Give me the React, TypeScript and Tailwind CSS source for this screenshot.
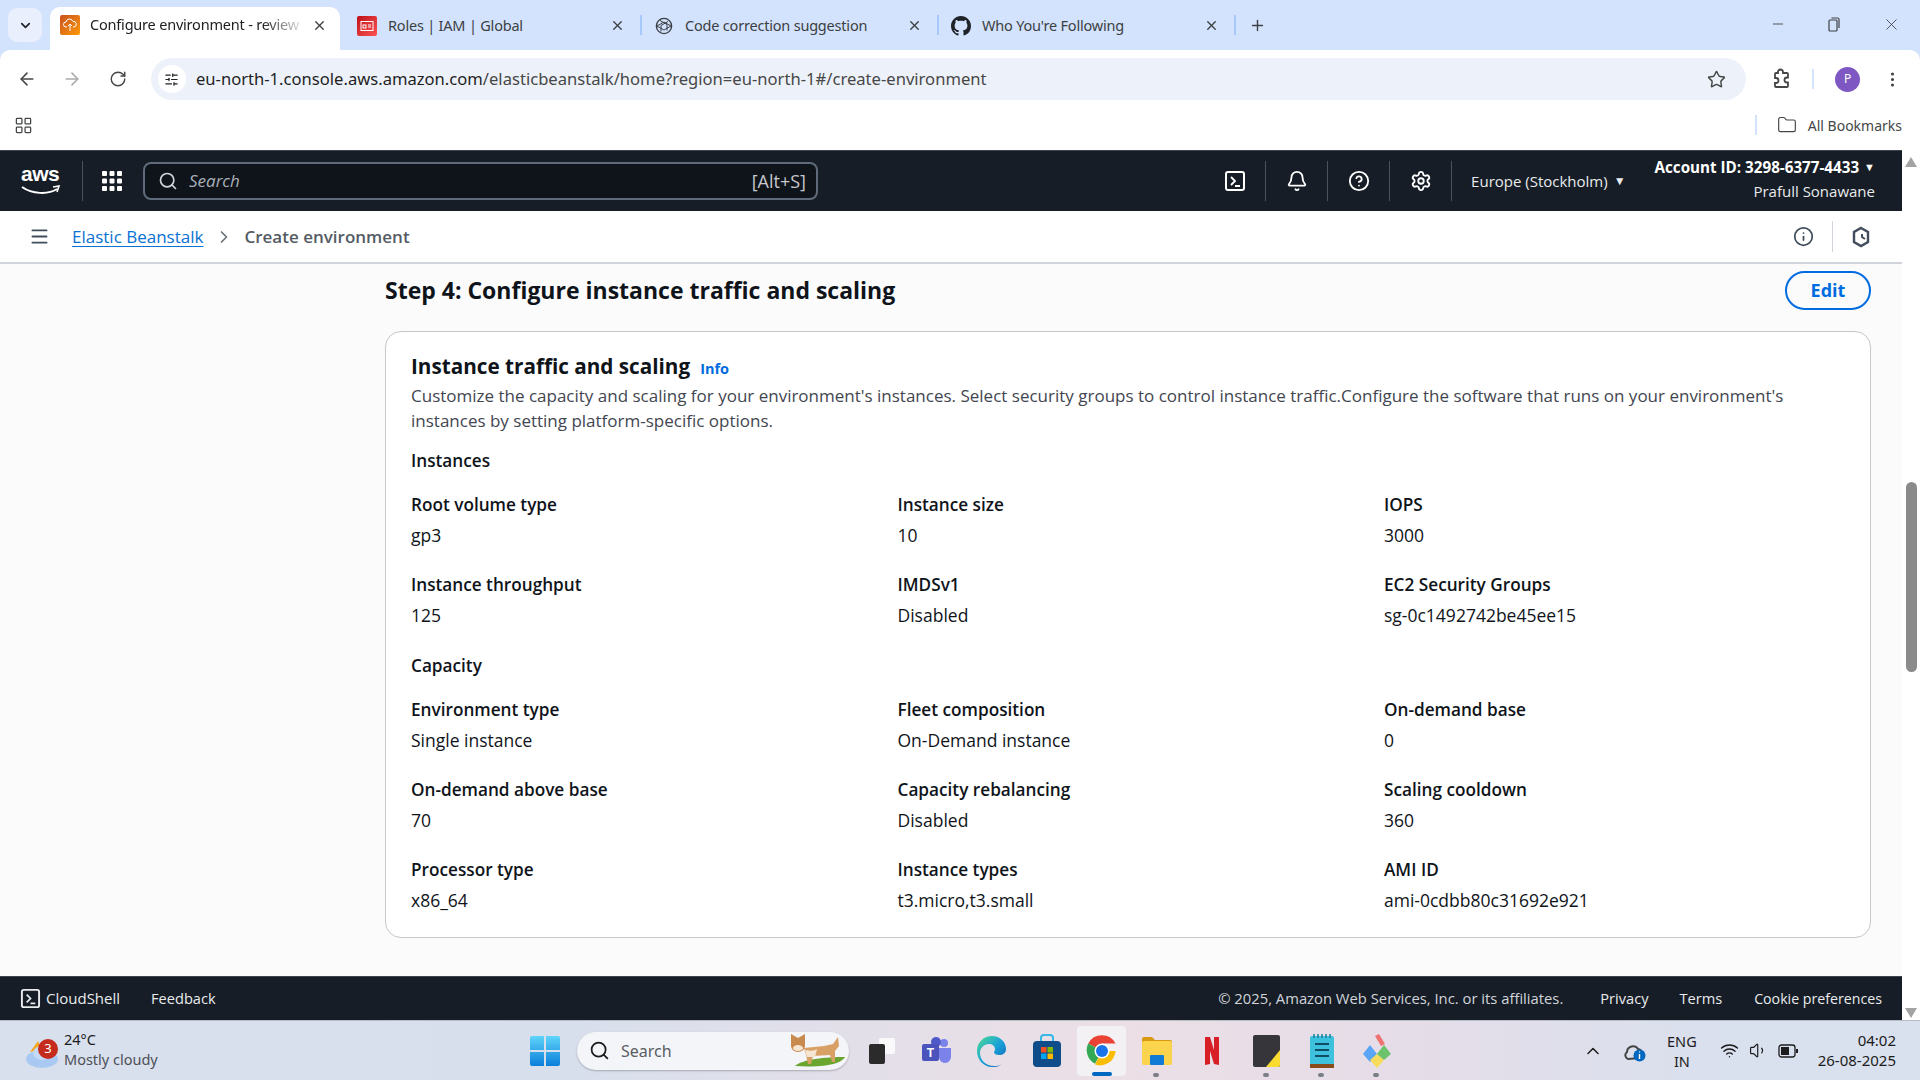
import { Bell, ChevronDown, ChevronRight, CircleHelp, Folder, Info, LayoutGrid, MoreVertical, RotateCw, Search, Settings, Star, Plus, X, ArrowLeft, ArrowRight, Menu, Minus, ChevronUp, Wifi, Volume1, SlidersHorizontal } from 'lucide-react'

const uiFont = "font-['Noto_Sans',sans-serif]"
const awsFont = "font-['Open_Sans',sans-serif]"

const instanceRows = [
  [['Root volume type', 'gp3'], ['Instance size', '10'], ['IOPS', '3000']],
  [['Instance throughput', '125'], ['IMDSv1', 'Disabled'], ['EC2 Security Groups', 'sg-0c1492742be45ee15']],
]

const capacityRows = [
  [['Environment type', 'Single instance'], ['Fleet composition', 'On-Demand instance'], ['On-demand base', '0']],
  [['On-demand above base', '70'], ['Capacity rebalancing', 'Disabled'], ['Scaling cooldown', '360']],
  [['Processor type', 'x86_64'], ['Instance types', 't3.micro,t3.small'], ['AMI ID', 'ami-0cdbb80c31692e921']],
]

function TerminalIcon({ size = 22 }: { size?: number }) {
  return (
    <svg width={size} height={size} viewBox="0 0 22 22" fill="none" stroke="currentColor" strokeWidth="2">
      <rect x="2" y="2" width="18" height="18" rx="2" />
      <path d="M7 7l4 4-4 4M11 16h5" strokeWidth="1.8" />
    </svg>
  )
}

function AwsLogo() {
  return (
    <div className="relative w-[40px] h-[32px]">
      <span className="absolute left-0 -top-[5px] text-[21px] font-bold text-white leading-[28px] tracking-[-0.5px] font-['Liberation_Sans',sans-serif]">aws</span>
      <svg className="absolute left-0 top-[20px]" width="40" height="12" viewBox="0 0 40 12" fill="none">
        <path d="M1 2c10 7 26 8 35 2" stroke="#fff" strokeWidth="2" />
        <path d="M32 2l6-1-2 6" stroke="#fff" strokeWidth="1.6" />
      </svg>
    </div>
  )
}

function FavAws() {
  return (
    <div className="w-[20px] h-[20px] shrink-0 rounded-[2px] bg-gradient-to-br from-[#c8511b] to-[#ff9900] flex items-center justify-center">
      <svg width="14" height="14" viewBox="0 0 14 14" fill="none" stroke="#fff" strokeWidth="1">
        <path d="M4 9H3a2 2 0 010-5 3.5 3.5 0 016.8-.6A2.5 2.5 0 0111 9h-1M7 6v7M5 8l2-2 2 2" />
      </svg>
    </div>
  )
}

function FavIam() {
  return (
    <div className="w-[20px] h-[20px] shrink-0 rounded-[2px] bg-gradient-to-br from-[#bd0816] to-[#ff5252] flex items-center justify-center">
      <svg width="14" height="14" viewBox="0 0 14 14" fill="none" stroke="#fff" strokeWidth="1">
        <rect x="1" y="2.5" width="12" height="9" />
        <rect x="3" y="6" width="3" height="3" />
        <path d="M8 6h3M8 8h3" />
      </svg>
    </div>
  )
}

function FavGpt() {
  return (
    <svg className="shrink-0" width="20" height="20" viewBox="0 0 20 20" fill="none" stroke="#3b3f45" strokeWidth="1.4">
      <circle cx="10" cy="10" r="7.6" />
      <path d="M6 4.5l7 4v6M14 5.5l-7 4v6M3 10l7-4 7 4M3 10l7 4 7-4" strokeWidth="1" />
    </svg>
  )
}

function FavGithub() {
  return (
    <svg className="shrink-0" width="20" height="20" viewBox="0 0 16 16" fill="#1f2328">
      <path d="M8 0C3.58 0 0 3.58 0 8c0 3.54 2.29 6.53 5.47 7.59.4.07.55-.17.55-.38 0-.19-.01-.82-.01-1.49-2.01.37-2.53-.49-2.69-.94-.09-.23-.48-.94-.82-1.13-.28-.15-.68-.52-.01-.53.63-.01 1.08.58 1.23.82.72 1.21 1.87.87 2.33.66.07-.52.28-.87.51-1.07-1.78-.2-3.64-.89-3.64-3.95 0-.87.31-1.59.82-2.15-.08-.2-.36-1.02.08-2.12 0 0 .67-.21 2.2.82.64-.18 1.32-.27 2-.27s1.36.09 2 .27c1.53-1.04 2.2-.82 2.2-.82.44 1.1.16 1.92.08 2.12.51.56.82 1.27.82 2.15 0 3.07-1.87 3.75-3.65 3.95.29.25.54.73.54 1.48 0 1.07-.01 1.93-.01 2.2 0 .21.15.46.55.38A8.01 8.01 0 0016 8c0-4.42-3.58-8-8-8z" />
    </svg>
  )
}

function ActiveTab() {
  return (
    <div className="h-[43px] w-[290px] shrink-0 bg-white rounded-t-[10px] flex items-center pl-[10px] pr-[13px] pb-[7px]">
      <FavAws />
      <span className="ml-[10px] flex-1 whitespace-nowrap overflow-hidden text-[14.5px] tracking-[-0.2px] text-[#202124] [mask-image:linear-gradient(to_right,black_80%,transparent)]">Configure environment - review</span>
      <X size={15} strokeWidth={2.2} className="ml-[6px] text-[#3c4043]" />
    </div>
  )
}

function Tab({ icon, title }: { icon: React.ReactNode; title: string }) {
  return (
    <div className="relative h-[42px] w-[297px] shrink-0 flex items-center pl-[10px] pr-[19px] pb-[7px]">
      {icon}
      <span className="ml-[11px] flex-1 whitespace-nowrap overflow-hidden text-[14.5px] tracking-[-0.2px] text-[#3c4043]">{title}</span>
      <X size={15} strokeWidth={2.2} className="text-[#3c4043]" />
      <div className="absolute right-[2px] top-[7px] w-[2px] h-[20px] bg-[#a8c7fa]" />
    </div>
  )
}

function BrowserChrome() {
  return (
    <div className={`${uiFont} shrink-0`}>
      <div className="h-[50px] bg-[#d3e3fd] flex items-end pl-[8px]">
        <div className="self-start mt-[8px] mr-[8px] w-[34px] h-[34px] rounded-[9px] bg-[#e9effc] flex items-center justify-center">
          <ChevronDown size={15} strokeWidth={2.6} className="text-[#202124]" />
        </div>
        <ActiveTab />
        <div className="ml-[7px] flex">
          <Tab icon={<FavIam />} title="Roles | IAM | Global" />
          <Tab icon={<FavGpt />} title="Code correction suggestion" />
          <Tab icon={<FavGithub />} title="Who You're Following" />
        </div>
        <Plus size={17} strokeWidth={2} className="self-center ml-[11px] text-[#3c4043]" />
        <div className="flex-1" />
        <div className="self-center flex items-center text-[#3c4043] mb-[2px]">
          <Minus size={16} strokeWidth={1.3} className="mr-[40px]" />
          <svg className="mr-[40px]" width="16" height="16" viewBox="0 0 16 16" fill="none" stroke="currentColor" strokeWidth="1.2">
            <rect x="3" y="4" width="8" height="11" rx="1" />
            <path d="M5.5 2h6a1.5 1.5 0 011.5 1.5V12" />
          </svg>
          <X size={19} strokeWidth={1.1} className="mr-[19px]" />
        </div>
      </div>
      <div className="h-[50px] bg-white rounded-t-[10px] pt-[8px] pl-[17px] pr-[18px]">
        <div className="h-[42px] flex items-center">
          <ArrowLeft size={20} strokeWidth={1.9} className="text-[#444746]" />
          <ArrowRight size={20} strokeWidth={1.9} className="ml-[25px] text-[#a9abad]" />
          <RotateCw size={18} strokeWidth={1.9} className="ml-[27px] text-[#444746]" />
          <div className="ml-[24px] w-[1597px] h-[42px] rounded-full bg-[#edf2fa] flex items-center pl-[7px] pr-[20px]">
            <div className="w-[28px] h-[28px] bg-white rounded-full flex items-center justify-center">
              <SlidersHorizontal size={15} strokeWidth={1.8} className="text-[#202124]" />
            </div>
            <span className="ml-[10px] pt-[1px] flex-1 text-[16.6px] text-[#1f1f1f] whitespace-nowrap">
              eu-north-1.console.aws.amazon.com<span className="text-[#474747]">/elasticbeanstalk/home?region=eu-north-1#/create-environment</span>
            </span>
            <Star size={19} strokeWidth={1.8} className="text-[#444746]" />
          </div>
          <svg className="ml-[24px]" width="22" height="22" viewBox="0 0 22 22" fill="none" stroke="#444746" strokeWidth="1.8">
            <path d="M8 5V4a2.5 2.5 0 015 0v1h4a1 1 0 011 1v3.5h-1a2.5 2.5 0 000 5h1V18a1 1 0 01-1 1H6a1 1 0 01-1-1v-3h1a2.5 2.5 0 000-5H5V6a1 1 0 011-1z" />
          </svg>
          <div className="ml-[20px] w-[2px] h-[20px] bg-[#d3e3fd]" />
          <div className="ml-[21px] w-[25px] h-[25px] rounded-full bg-[#7e57c2] text-white text-[12px] flex items-center justify-center">P</div>
          <MoreVertical size={19} strokeWidth={2} className="ml-[23px] text-[#444746]" />
        </div>
      </div>
      <div className="h-[50px] bg-white flex items-center pl-[14px] pr-[18px]">
        <LayoutGrid size={19} strokeWidth={1.6} className="text-[#444746]" />
        <div className="flex-1" />
        <div className="w-[2px] h-[20px] bg-[#d3e3fd] mr-[20px]" />
        <Folder size={20} strokeWidth={1.4} className="text-[#444746]" />
        <span className="ml-[11px] text-[14px] text-[#444746]">All Bookmarks</span>
      </div>
    </div>
  )
}

function ConsoleHeader() {
  return (
    <div className={`${awsFont} h-[61px] bg-[#161d26] flex items-center pl-[21px] pr-[27px] text-white border-t border-[#3b4450]`}>
      <AwsLogo />
      <div className="ml-[21px] w-px h-[40px] bg-[#495260]" />
      <svg className="ml-[18px]" width="22" height="22" viewBox="0 0 22 22" fill="#fff">
        {[1, 8.5, 16].flatMap((y) => [1, 8.5, 16].map((x) => <rect key={`${x}-${y}`} x={x} y={y} width="5" height="5" rx="1" />))}
      </svg>
      <div className="ml-[20px] w-[675px] h-[38px] rounded-[8px] border-2 border-[#5f6b7a] bg-[#0f141a] flex items-center pl-[13px] pr-[10px]">
        <Search size={20} strokeWidth={2} className="text-[#d1d5db]" />
        <span className="ml-[11px] flex-1 italic text-[17px] text-[#a8afb8]">Search</span>
        <span className="text-[18px] text-[#c6c6cd]">[Alt+S]</span>
      </div>
      <div className="flex-1" />
      <div className="flex items-center h-[40px]">
        <div className="w-[62px] flex justify-center border-r border-[#495260] h-full items-center"><TerminalIcon /></div>
        <div className="w-[62px] flex justify-center border-r border-[#495260] h-full items-center"><Bell size={22} strokeWidth={2} /></div>
        <div className="w-[62px] flex justify-center border-r border-[#495260] h-full items-center"><CircleHelp size={22} strokeWidth={2} /></div>
        <div className="w-[62px] flex justify-center border-r border-[#495260] h-full items-center"><Settings size={22} strokeWidth={2} /></div>
      </div>
      <span className="ml-[19px] text-[15px] text-[#e9ebed] whitespace-nowrap">Europe (Stockholm)</span>
      <span className="ml-[6px] text-[12px] text-[#e9ebed]">▼</span>
      <div className="ml-[29px] flex flex-col items-end -mt-[4px]">
        <div className="flex items-center font-bold text-[15.2px] leading-[24px] whitespace-nowrap">Account ID: 3298-6377-4433<span className="ml-[5px] text-[11px]">▼</span></div>
        <div className="text-[15px] leading-[24px] text-[#e9ebed]">Prafull Sonawane</div>
      </div>
    </div>
  )
}

function Breadcrumbs() {
  return (
    <div className={`${awsFont} h-[53px] shrink-0 bg-white border-b-[2px] border-[#d1d5db] flex items-center pl-[29px] pr-[30px]`}>
      <Menu size={21} strokeWidth={2.2} className="text-[#414d5c]" />
      <span className="ml-[22px] text-[17px] text-[#0972d3] underline underline-offset-[3px]">Elastic Beanstalk</span>
      <ChevronRight size={20} strokeWidth={2} className="ml-[11px] text-[#687078]" />
      <span className="ml-[10px] text-[17px] font-semibold text-[#545b64]">Create environment</span>
      <div className="flex-1" />
      <Info size={21} strokeWidth={2} className="text-[#414d5c]" />
      <div className="ml-[18px] w-px h-[31px] bg-[#d1d5db]" />
      <svg className="ml-[17px]" width="22" height="22" viewBox="0 0 22 22" fill="none" stroke="#414d5c" strokeWidth="2.4">
        <path d="M11 2l7 4v10l-7 4-7-4V6z" />
        <path d="M15 13l-3-2V8" strokeWidth="2" />
      </svg>
    </div>
  )
}

function Field({ label, value }: { label: string; value: string }) {
  return (
    <div>
      <div className="text-[17.2px] font-semibold leading-[30px] text-[#0f141a]">{label}</div>
      <div className="text-[17.5px] leading-[30px] text-[#0f141a]">{value}</div>
    </div>
  )
}

function FieldGrid({ rows }: { rows: string[][][] }) {
  return (
    <div className="grid grid-cols-[486.5px_486.5px_1fr] gap-y-[20px] mt-[17px]">
      {rows.flat().map(([label, value]) => (
        <Field key={label} label={label} value={value} />
      ))}
    </div>
  )
}

function ReviewPanel() {
  return (
    <div className={`${awsFont} flex-1 min-h-0 bg-[#fbfbfb] pl-[385px] pr-[31px] pt-[6px] overflow-hidden`}>
      <div className="flex items-center justify-between h-[40px]">
        <h2 className="text-[23px] font-bold text-[#0f141a]">Step 4: Configure instance traffic and scaling</h2>
        <div className="w-[86px] h-[39px] border-2 border-[#006ce0] rounded-full flex items-center justify-center text-[18px] font-bold text-[#006ce0]">Edit</div>
      </div>
      <div className="mt-[21px] bg-white border border-[#c6c6cd] rounded-[16px] h-[607px] pl-[25px] pr-[20px] pt-[19px]">
        <div className="flex items-baseline h-[34px]">
          <h3 className="text-[20.7px] font-bold text-[#0f141a]">Instance traffic and scaling</h3>
          <span className="ml-[10px] text-[14.5px] font-bold text-[#006ce0]">Info</span>
        </div>
        <p className="text-[17px] leading-[25px] text-[#424650] -mt-[2px]">
          Customize the capacity and scaling for your environment's instances. Select security groups to control instance traffic.Configure the software that runs on your environment's instances by setting platform-specific options.
        </p>
        <div className="mt-[15px] text-[17.2px] font-semibold leading-[25px] text-[#0f141a]">Instances</div>
        <FieldGrid rows={instanceRows} />
        <div className="mt-[23px] text-[17.2px] font-semibold leading-[25px] text-[#0f141a]">Capacity</div>
        <FieldGrid rows={capacityRows} />
      </div>
    </div>
  )
}

function ConsoleFooter() {
  return (
    <div className={`${awsFont} h-[44px] shrink-0 bg-[#161d26] border-t border-[#3b4450] flex items-center pl-[20px] pr-[20px] text-[14.6px] text-[#e9ebed]`}>
      <TerminalIcon size={21} />
      <span className="ml-[5px] text-[15px]">CloudShell</span>
      <span className="ml-[31px]">Feedback</span>
      <div className="flex-1" />
      <span className="text-[#d1d5db] text-[14.8px]">© 2025, Amazon Web Services, Inc. or its affiliates.</span>
      <span className="ml-[37px]">Privacy</span>
      <span className="ml-[31px]">Terms</span>
      <span className="ml-[32px] text-[14.2px]">Cookie preferences</span>
    </div>
  )
}

function Scrollbar() {
  return (
    <div className="w-[18px] shrink-0 bg-white flex flex-col items-center pt-[7px] pb-[2px]">
      <div className="w-0 h-0 border-x-[6px] border-x-transparent border-b-[10px] border-b-[#a3a3a3]" />
      <div className="mt-[315px] w-[11px] h-[190px] rounded-full bg-[#8a8a8a]" />
      <div className="flex-1" />
      <div className="w-0 h-0 border-x-[6px] border-x-transparent border-t-[10px] border-t-[#a3a3a3]" />
    </div>
  )
}

function TaskIcon({ children, dot, active }: { children: React.ReactNode; dot?: boolean; active?: boolean }) {
  return (
    <div className={`relative w-[49px] h-[50px] mx-[3px] flex items-center justify-center rounded-[4px] ${active ? 'bg-[#f4f1f4]' : ''}`}>
      {children}
      {dot && <div className="absolute bottom-[-1px] left-[21px] w-[6px] h-[4px] rounded-full bg-[#7a7f87]" />}
      {active && <div className="absolute bottom-0 left-[15px] w-[20px] h-[4px] rounded-full bg-[#0067c0]" />}
    </div>
  )
}

function Taskbar() {
  return (
    <div className={`${uiFont} h-[60px] shrink-0 flex items-center bg-[linear-gradient(90deg,#d8e0ee_0%,#d8dfec_30%,#ecdfe6_58%,#e6dde8_72%,#d9e0ee_90%)] border-t border-[#b8bcc4] relative`}>
      <div className="w-[546px] shrink-0 flex items-center pl-[25px] relative">
        <svg width="34" height="38" viewBox="0 0 34 38">
          <path d="M5 20l8-11 4 8z" fill="#f5a623" />
          <ellipse cx="17" cy="27" rx="16" ry="9" fill="#a9c9f2" />
          <ellipse cx="17" cy="21" rx="9" ry="7" fill="#c4daf6" />
        </svg>
        <div className="absolute left-[38px] top-[7px] w-[20px] h-[20px] rounded-full bg-[#c42b1c] text-white text-[13px] flex items-center justify-center">3</div>
        <div className="ml-[5px] -mt-[4px] text-[14.5px] leading-[20px]">
          <div className="text-[#1c1c1c]">24°C</div>
          <div className="text-[#4d4f54]">Mostly cloudy</div>
        </div>
      </div>
      <svg className="-ml-[16px]" width="30" height="30" viewBox="0 0 30 30">
        <defs>
          <linearGradient id="win" x1="0" y1="0" x2="0" y2="1">
            <stop offset="0" stopColor="#5fd4fb" />
            <stop offset="1" stopColor="#0a7fd9" />
          </linearGradient>
        </defs>
        <path d="M0 2a2 2 0 012-2h12v14H0zM16 0h12a2 2 0 012 2v12H16zM0 16h14v14H2a2 2 0 01-2-2zM16 16h14v12a2 2 0 01-2 2H16z" fill="url(#win)" />
      </svg>
      <div className="ml-[17px] w-[272px] h-[38px] rounded-full bg-[#f4f5f9] shadow-[0_1px_2px_rgba(0,0,0,0.25)] flex items-center pl-[12px] relative">
        <Search size={21} strokeWidth={2} className="text-[#1c1c1c]" />
        <span className="ml-[11px] text-[16px] text-[#5a5d63]">Search</span>
        <svg className="absolute right-[2px] top-[1px]" width="58" height="35" viewBox="0 0 58 35">
          <path d="M6 33c8-7 30-9 50-9-3 6-18 11-50 9z" fill="#6aa52f" />
          <path d="M15 15l20-2 9-2 5-7 1 9-4 5v11h-3l-2-7-17 1-2 8h-3l-2-9z" fill="#d9a066" />
          <path d="M2 1l7 4 7-4v12a7 6 0 01-14 0z" fill="#c98a4f" />
          <ellipse cx="9" cy="15" rx="5" ry="3" fill="#f5e6d3" />
          <path d="M16 17c5 1 9 1 12-1l-2 8-8 0z" fill="#f5e6d3" />
        </svg>
      </div>
      <div className="flex items-center ml-[5px]">
        <TaskIcon>
          <div className="relative w-[26px] h-[26px]">
            <div className="absolute right-0 top-0 w-[16px] h-[16px] bg-white/80 rounded-[2px]" />
            <div className="absolute left-0 bottom-0 w-[16px] h-[20px] bg-[#2b2b2b] rounded-[2px]" />
          </div>
        </TaskIcon>
        <TaskIcon>
          <svg width="32" height="30" viewBox="0 0 32 30">
            <circle cx="23" cy="7" r="4" fill="#7b83eb" />
            <circle cx="15" cy="6" r="5" fill="#5059c9" />
            <path d="M12 12h18v9a6 6 0 01-12 0z" fill="#7b83eb" />
            <rect x="1" y="8" width="17" height="17" rx="2" fill="#4b53bc" />
            <text x="9.5" y="21" fontSize="12" fontWeight="700" fill="#fff" textAnchor="middle" fontFamily="Liberation Sans">T</text>
          </svg>
        </TaskIcon>
        <TaskIcon>
          <svg width="30" height="32" viewBox="0 0 30 32">
            <defs>
              <linearGradient id="edge" x1="0" y1="0" x2="1" y2="1">
                <stop offset="0" stopColor="#4fdc8f" />
                <stop offset="0.5" stopColor="#1aa3d8" />
                <stop offset="1" stopColor="#0c5db3" />
              </linearGradient>
            </defs>
            <path d="M15 1c8 0 14 6 14 13 0 4-3 6-7 6-3 0-5-1-5-3 0-1 1-1 1-3 0-3-3-5-6-5-5 0-9 4-9 9 0 7 6 13 14 13 3 0 5 0 7-2-2 3-6 3-9 3C7 32 0 25 0 16 0 7 7 1 15 1z" fill="url(#edge)" />
          </svg>
        </TaskIcon>
        <TaskIcon>
          <svg width="30" height="34" viewBox="0 0 30 34">
            <path d="M9 8V4a3 3 0 013-3h6a3 3 0 013 3v4" fill="none" stroke="#36b9e8" strokeWidth="2" />
            <rect x="1" y="7" width="28" height="26" rx="4" fill="#0f4c8a" />
            <rect x="9" y="13" width="5.5" height="5.5" fill="#f25022" />
            <rect x="15.5" y="13" width="5.5" height="5.5" fill="#7fba00" />
            <rect x="9" y="19.5" width="5.5" height="5.5" fill="#00a4ef" />
            <rect x="15.5" y="19.5" width="5.5" height="5.5" fill="#ffb900" />
          </svg>
        </TaskIcon>
        <TaskIcon active>
          <svg width="32" height="32" viewBox="0 0 32 32">
            <path d="M16 16L2.2 8.5A15.5 15.5 0 0129.6 8.5H16z" fill="#ea4335" />
            <path d="M16 16l-7 12.8A15.5 15.5 0 012.2 8.5z" fill="#34a853" />
            <path d="M16 16h13.6A15.5 15.5 0 019 29.5z" fill="#fbbc04" />
            <circle cx="16" cy="16" r="7.5" fill="#fff" />
            <circle cx="16" cy="16" r="6" fill="#1a73e8" />
          </svg>
        </TaskIcon>
        <TaskIcon dot>
          <svg width="32" height="30" viewBox="0 0 32 30">
            <path d="M1 3a2 2 0 012-2h8l3 3h15a2 2 0 012 2v2H1z" fill="#d99a13" />
            <rect x="1" y="5" width="30" height="24" rx="2" fill="#fcd34d" />
            <rect x="9" y="19" width="14" height="10" rx="1" fill="#0f7bd6" />
          </svg>
        </TaskIcon>
        <TaskIcon>
          <svg width="16" height="28" viewBox="0 0 16 28">
            <path d="M1 0h5l4 13V0h5v28l-5-1-4-13v13l-5 1z" fill="#d81f26" />
          </svg>
        </TaskIcon>
        <TaskIcon dot>
          <svg width="27" height="32" viewBox="0 0 27 32">
            <rect width="27" height="32" rx="2" fill="#36363a" />
            <path d="M27 15v15a2 2 0 01-2 2H13z" fill="#fadb2f" />
          </svg>
        </TaskIcon>
        <TaskIcon dot>
          <svg width="24" height="34" viewBox="0 0 24 34">
            <rect y="2" width="24" height="30" rx="2" fill="#3ec1dd" />
            <rect y="30" width="24" height="4" fill="#8a4b1b" />
            <path d="M5 10h14M5 16h14M5 22h14" stroke="#0e4d63" strokeWidth="2" />
            <path d="M4 0v4M8 0v4M12 0v4M16 0v4M20 0v4" stroke="#1a7f9a" strokeWidth="1.5" />
          </svg>
        </TaskIcon>
        <TaskIcon dot>
          <svg width="32" height="34" viewBox="0 0 32 34">
            <path d="M9 11l7 9-7 8-7-8z" fill="#5aa5f5" />
            <path d="M16 20l7 6-7 8-7-8z" fill="#f7dc5c" />
            <path d="M23 11l7 9-7 6-7-6z" fill="#6cc36c" />
            <path d="M14 2l4-2 6 10-4 2z" fill="#ee7272" />
          </svg>
        </TaskIcon>
      </div>
      <div className="flex-1" />
      <div className="flex items-center pr-[24px] text-[#1c1c1c]">
        <ChevronUp size={20} strokeWidth={1.8} />
        <svg className="ml-[21px]" width="22" height="22" viewBox="0 0 22 22">
          <path d="M4 19a4 4 0 01-1-7 6 6 0 0111-3 5 5 0 012 9z" fill="none" stroke="#444" strokeWidth="2" />
          <circle cx="15.5" cy="15.5" r="6" fill="#0067c0" />
          <path d="M15.5 14v5M15.5 11.5v1" stroke="#fff" strokeWidth="1.4" />
        </svg>
        <div className="ml-[21px] text-[14.5px] leading-[20px] text-center">
          <div>ENG</div>
          <div>IN</div>
        </div>
        <Wifi size={19} strokeWidth={1.8} className="ml-[23px]" />
        <Volume1 size={19} strokeWidth={1.5} className="ml-[10px]" />
        <svg className="ml-[10px]" width="21" height="14" viewBox="0 0 21 14" fill="none">
          <rect x="1" y="1" width="16" height="12" rx="2.5" stroke="#1c1c1c" strokeWidth="1.3" />
          <rect x="3" y="3" width="8" height="8" fill="#1c1c1c" />
          <rect x="18" y="5" width="2" height="4" fill="#1c1c1c" />
        </svg>
        <div className="ml-[19px] text-[15px] leading-[20px] text-right -mt-[2px]">
          <div>04:02</div>
          <div>26-08-2025</div>
        </div>
      </div>
    </div>
  )
}

export default function App() {
  return (
    <div className="w-[1920px] h-[1080px] flex flex-col overflow-hidden bg-[#d3e3fd]">
      <BrowserChrome />
      <div className="flex-1 min-h-0 flex bg-white">
        <div className="flex-1 min-w-0 flex flex-col">
          <ConsoleHeader />
          <Breadcrumbs />
          <ReviewPanel />
          <ConsoleFooter />
        </div>
        <Scrollbar />
      </div>
      <Taskbar />
    </div>
  )
}
